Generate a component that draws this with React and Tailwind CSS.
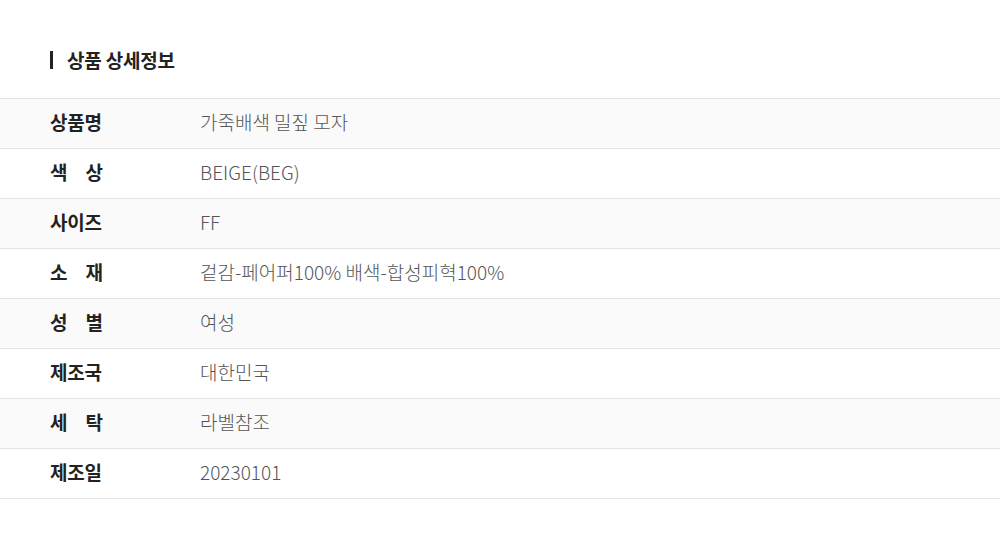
import React from "react";

const rows = [
  ["상품명", "가죽배색 밀짚 모자"],
  ["색상", "BEIGE(BEG)"],
  ["사이즈", "FF"],
  ["소재", "겉감-페어퍼100% 배색-합성피혁100%"],
  ["성별", "여성"],
  ["제조국", "대한민국"],
  ["세탁", "라벨참조"],
  ["제조일", "20230101"],
];

export default function App() {
  return (
    <div
      className="w-[1000px] h-[548px] bg-white"
      style={{ fontFamily: '"Noto Sans CJK KR", "Noto Sans", sans-serif' }}
    >
      <div className="pt-[49px] pl-[50px] flex items-center h-[71px]">
        <div className="flex items-center h-[22px]">
          <span className="w-[3px] h-[18px] bg-[#222]"></span>
          <span className="ml-[14px] text-[19px] font-bold text-[#222] leading-[22px] tracking-[-0.2px]">
            상품 상세정보
          </span>
        </div>
      </div>
      <div className="mt-[27px] border-t border-[#e2e2e2]">
        {rows.map(([k, v], i) => (
          <div
            key={i}
            className={`flex items-center h-[50px] border-b border-[#e2e2e2] ${
              i % 2 === 0 ? "bg-[#fafafa]" : "bg-white"
            }`}
          >
            <div className="w-[200px] pl-[50px] text-[19px] font-bold text-[#222] leading-[24px] -mt-[3px]">
              {k.length === 2 ? (
                <span className="flex justify-between w-[53px]">
                  <span>{k[0]}</span>
                  <span>{k[1]}</span>
                </span>
              ) : (
                <span className="tracking-[-0.2px]">{k}</span>
              )}
            </div>
            <div className="text-[19px] font-light text-[#555] tracking-[0px] leading-[24px] -mt-[3px]">{v}</div>
          </div>
        ))}
      </div>
    </div>
  );
}
